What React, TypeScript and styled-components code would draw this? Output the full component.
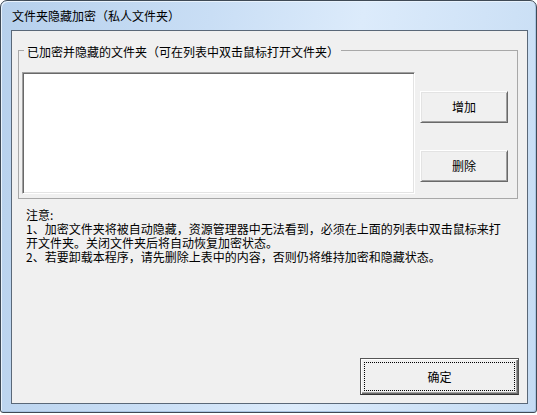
import React from "react";
import styled, { createGlobalStyle } from "styled-components";

const Global = createGlobalStyle`
  html, body { margin: 0; padding: 0; background: #ffffff; }
  body { font-family: "Noto Sans CJK SC", "Noto Sans", sans-serif; font-size: 12px; }
  * { box-sizing: border-box; }
`;

const Window = styled.div`
  width: 537px;
  height: 413px;
  border: 1px solid #3f4a56;
  border-radius: 7px 7px 3px 3px;
  background: linear-gradient(100deg, #b6d0ec 0%, #c9def5 35%, #dcebfb 60%, #c4dbf3 100%);
  box-shadow: inset 1px 1px 0 #e8f2fc, inset -1px -1px 0 #a9c4e2;
  display: flex;
  flex-direction: column;
  padding: 0 8px 8px 10px;
`;

const TitleBar = styled.div`
  height: 29px;
  display: flex;
  align-items: center;
  padding-left: 1px;
  color: #000;
  font-size: 12px;
  line-height: 14px;
`;

const Client = styled.div`
  flex: 1;
  border: 1px solid #5a6878;
  background: #f0f0f0;
  display: flex;
  flex-direction: column;
`;

const Group = styled.fieldset`
  margin: 10px 9px 0 6px;
  padding: 13px 8px 4px 3px;
  border: 1px solid #a8a8a8;
  min-inline-size: 0;
  display: flex;
  gap: 5px;
`;

const Caption = styled.legend`
  margin-left: 2px;
  padding: 4px 2px 0 3px;
  font-size: 12px;
  line-height: 14px;
  color: #000;
`;

const ListBox = styled.div`
  width: 393px;
  height: 122px;
  background: #ffffff;
  border: 1px solid;
  border-color: #a0a0a0 #ffffff #ffffff #a0a0a0;
  box-shadow: inset 1px 1px 0 #696969, inset -1px -1px 0 #e3e3e3;
`;

const ButtonColumn = styled.div`
  display: flex;
  flex-direction: column;
  gap: 27px;
  padding-top: 19px;
`;

const Button = styled.button<{ $default?: boolean }>`
  width: ${(p) => (p.$default ? "159px" : "88px")};
  height: ${(p) => (p.$default ? "37px" : "32px")};
  background: #f0f0f0;
  font-family: "Noto Sans CJK SC", "Noto Sans", sans-serif;
  font-size: 12px;
  line-height: 14px;
  color: #000;
  padding: 0;
  border: 1px solid;
  border-color: ${(p) => (p.$default ? "#555 #555 #333 #555" : "#ffffff #696969 #696969 #ffffff")};
  box-shadow: ${(p) =>
    p.$default
      ? "inset 1px 1px 0 #ffffff, inset -1px -1px 0 #696969, inset -2px -2px 0 #a0a0a0"
      : "inset 1px 1px 0 #e3e3e3, inset -1px -1px 0 #a0a0a0"};
  outline: ${(p) => (p.$default ? "1px dotted #000" : "none")};
  outline-offset: -5px;
`;

const Notes = styled.div`
  margin: 9px 0 0 14px;
  width: 482px;
  font-size: 12px;
  line-height: 14px;
  color: #000;
`;

const Footer = styled.div`
  margin-top: auto;
  display: flex;
  justify-content: flex-end;
  padding: 0 8px 8px 0;
`;

export default function App() {
  return (
    <>
      <Global />
      <Window>
        <TitleBar>文件夹隐藏加密（私人文件夹）</TitleBar>
        <Client>
          <Group>
            <Caption>已加密并隐藏的文件夹（可在列表中双击鼠标打开文件夹）</Caption>
            <ListBox />
            <ButtonColumn>
              <Button>增加</Button>
              <Button>删除</Button>
            </ButtonColumn>
          </Group>
          <Notes>
            注意:
            <br />
            1、加密文件夹将被自动隐藏，资源管理器中无法看到，必须在上面的列表中双击鼠标来打开文件夹。关闭文件夹后将自动恢复加密状态。
            <br />
            2、若要卸载本程序，请先删除上表中的内容，否则仍将维持加密和隐藏状态。
          </Notes>
          <Footer>
            <Button $default>确定</Button>
          </Footer>
        </Client>
      </Window>
    </>
  );
}
